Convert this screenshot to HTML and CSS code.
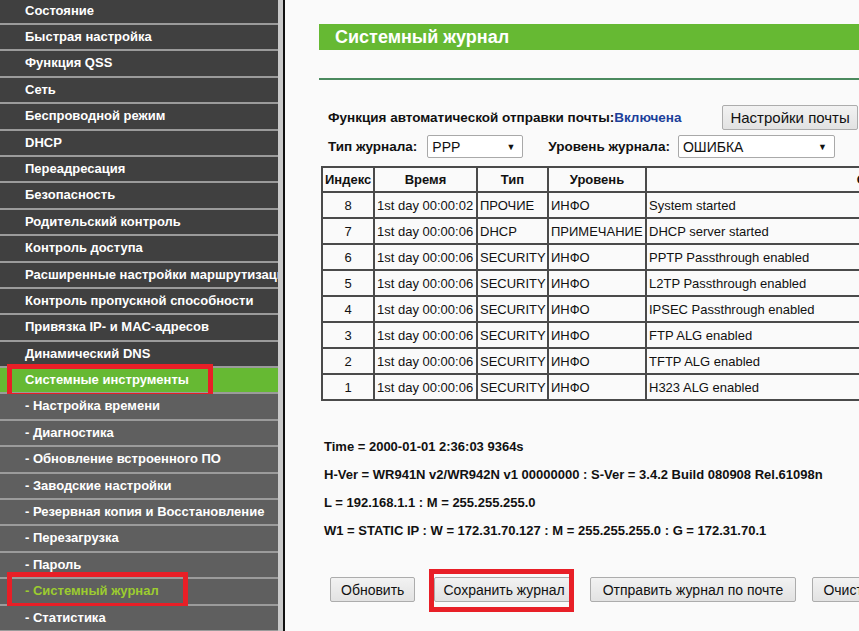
FILE: index.html
```html
<!DOCTYPE html>
<html lang="ru">
<head>
    <meta charset="UTF-8">
    <title>Системный журнал</title>
    <link rel="stylesheet" href="styles.css">
</head>
<body>

<div class="page">
    <nav class="menu">
        <a class="item">Состояние</a>
        <a class="item">Быстрая настройка</a>
        <a class="item">Функция QSS</a>
        <a class="item">Сеть</a>
        <a class="item">Беспроводной режим</a>
        <a class="item">DHCP</a>
        <a class="item">Переадресация</a>
        <a class="item">Безопасность</a>
        <a class="item">Родительский контроль</a>
        <a class="item">Контроль доступа</a>
        <a class="item">Расширенные настройки маршрутизации</a>
        <a class="item">Контроль пропускной способности</a>
        <a class="item">Привязка IP- и MAC-адресов</a>
        <a class="item">Динамический DNS</a>
        <a class="item open mark-tools">Системные инструменты</a>
        <a class="item sub">- Настройка времени</a>
        <a class="item sub">- Диагностика</a>
        <a class="item sub">- Обновление встроенного ПО</a>
        <a class="item sub">- Заводские настройки</a>
        <a class="item sub">- Резервная копия и Восстановление</a>
        <a class="item sub">- Перезагрузка</a>
        <a class="item sub">- Пароль</a>
        <a class="item sub current mark-log">- Системный журнал</a>
        <a class="item sub">- Статистика</a>
    </nav>
    <div class="divider"></div>

    <main class="content">
        <div class="title">Системный журнал</div>
        <div class="rule"></div>

        <div class="form-row mail-row">
            <span class="label">Функция автоматической отправки почты:<span class="on">Включена</span></span>
            <button class="btn mail-btn">Настройки почты</button>
        </div>

        <div class="form-row type-row">
            <span class="label">Тип журнала:</span>
            <div class="select type-select"><span>PPP</span><span class="arrow">▼</span></div>
            <span class="label level-label">Уровень журнала:</span>
            <div class="select level-select"><span>ОШИБКА</span><span class="arrow">▼</span></div>
        </div>

        <table class="log">
            <tr>
                <th class="c-idx">Индекс</th>
                <th class="c-time">Время</th>
                <th class="c-type">Тип</th>
                <th class="c-level">Уровень</th>
                <th class="c-msg">Сообщение</th>
            </tr>
            <tr><td class="num">8</td><td>1st day 00:00:02</td><td>ПРОЧИЕ</td><td>ИНФО</td><td>System started</td></tr>
            <tr><td class="num">7</td><td>1st day 00:00:06</td><td>DHCP</td><td>ПРИМЕЧАНИЕ</td><td>DHCP server started</td></tr>
            <tr><td class="num">6</td><td>1st day 00:00:06</td><td>SECURITY</td><td>ИНФО</td><td>PPTP Passthrough enabled</td></tr>
            <tr><td class="num">5</td><td>1st day 00:00:06</td><td>SECURITY</td><td>ИНФО</td><td>L2TP Passthrough enabled</td></tr>
            <tr><td class="num">4</td><td>1st day 00:00:06</td><td>SECURITY</td><td>ИНФО</td><td>IPSEC Passthrough enabled</td></tr>
            <tr><td class="num">3</td><td>1st day 00:00:06</td><td>SECURITY</td><td>ИНФО</td><td>FTP ALG enabled</td></tr>
            <tr><td class="num">2</td><td>1st day 00:00:06</td><td>SECURITY</td><td>ИНФО</td><td>TFTP ALG enabled</td></tr>
            <tr><td class="num">1</td><td>1st day 00:00:06</td><td>SECURITY</td><td>ИНФО</td><td>H323 ALG enabled</td></tr>
        </table>

        <div class="info">
            <p>Time = 2000-01-01 2:36:03 9364s</p>
            <p>H-Ver = WR941N v2/WR942N v1 00000000 : S-Ver = 3.4.2 Build 080908 Rel.61098n</p>
            <p>L = 192.168.1.1 : M = 255.255.255.0</p>
            <p>W1 = STATIC IP : W = 172.31.70.127 : M = 255.255.255.0 : G = 172.31.70.1</p>
        </div>

        <div class="actions">
            <button class="btn refresh">Обновить</button>
            <button class="btn save mark-save">Сохранить журнал</button>
            <button class="btn send">Отправить журнал по почте</button>
            <button class="btn">Очистить журнал</button>
        </div>
    </main>
</div>

</body>
</html>
```

FILE: styles.css
```css
body {
    margin: 0;
    height: 631px;
    overflow: hidden;
    font-family: "Liberation Sans", Arial, sans-serif;
    background: #fafafa;
}

.page {
    display: flex;
    height: 631px;
}

/* left menu */
.menu {
    width: 278px;
    flex-shrink: 0;
    background: #5f5f5f;
    margin-top: -1.4px;
    overflow: hidden;
}

.item {
    display: block;
    position: relative;
    height: 24.4px;
    line-height: 24px;
    padding-left: 25px;
    border-bottom: 2px solid #9b9b9b;
    background: #404040;
    color: #fff;
    font-size: 13px;
    font-weight: bold;
    white-space: nowrap;
}

.item.open {
    background: #66b933;
}

.item.sub {
    background: #5f5f5f;
}

.item.current {
    color: #9ccc2f;
}

/* red marks drawn over the screenshot */
.mark-tools::after,
.mark-log::after,
.mark-save::after {
    content: "";
    position: absolute;
    border: 5px solid #e81f27;
    pointer-events: none;
}

.mark-tools::after {
    left: 7px;
    top: -4px;
    width: 196px;
    height: 24px;
}

.mark-log::after {
    left: 7px;
    top: -7px;
    width: 171px;
    height: 26px;
}

.divider {
    width: 5px;
    flex-shrink: 0;
    background: #c9c9c9;
    border-right: 2px solid #111;
}

/* right side */
.content {
    flex: 1;
    min-width: 0;
    padding: 24px 0 0 34px;
    white-space: nowrap;
}

.title {
    height: 26px;
    line-height: 26px;
    background: #66b933;
    color: #fff;
    font-size: 18px;
    font-weight: bold;
    padding-left: 16px;
}

.rule {
    height: 2px;
    margin-top: 28px;
    background: #4b8a5e;
}

.btn {
    position: relative;
    height: 25px;
    padding: 0 10px;
    font-family: "Liberation Sans", Arial, sans-serif;
    font-size: 14px;
    color: #111;
    background: linear-gradient(#f2f2f2, #e2e2e2);
    border: 1px solid #acacac;
    border-radius: 2px;
}

.form-row {
    display: flex;
    align-items: center;
    padding-left: 9px;
    font-size: 13.5px;
}

.label {
    font-weight: bold;
    color: #111;
}

.on {
    color: #1c3f9a;
}

.mail-row {
    margin-top: 25px;
    height: 24px;
}

.mail-row .mail-btn {
    margin-left: 41px;
    padding: 0 7px;
    font-size: 15px;
}

.type-row {
    margin-top: 6px;
    height: 23px;
}

.select {
    display: flex;
    justify-content: space-between;
    align-items: center;
    box-sizing: border-box;
    height: 23px;
    padding: 0 7px 0 4px;
    background: #fff;
    border: 1px solid #a9a9a9;
    border-radius: 2px;
    font-size: 14px;
    color: #111;
}

.select .arrow {
    font-size: 9px;
}

.type-select {
    width: 96px;
    margin-left: 10px;
}

.level-label {
    margin-left: 25px;
}

.level-select {
    width: 157px;
    margin-left: 8px;
}

/* log table */
.log {
    margin: 8px 0 0 2px;
    width: 820px;
    table-layout: fixed;
    border-collapse: collapse;
    border: 2px solid #3a3a3a;
    font-size: 13px;
    color: #111;
}

.log th,
.log td {
    box-sizing: border-box;
    height: 26px;
    padding: 0 2px;
    border: 2px solid #4a4a4a;
    text-align: left;
    overflow: hidden;
}

.log th {
    height: 25px;
    text-align: center;
}

.log td.num {
    text-align: center;
}

.c-idx { width: 52px; }
.c-time { width: 103px; }
.c-type { width: 71px; }
.c-level { width: 98px; }
.c-msg { width: 496px; }

.info {
    margin-top: 32px;
    padding-left: 5px;
    font-size: 13px;
    font-weight: bold;
    color: #111;
}

.info p {
    margin: 0;
    height: 28px;
    line-height: 28px;
}

.actions {
    display: flex;
    gap: 16px;
    margin-top: 32px;
    padding-left: 11px;
}

.actions .save {
    margin-left: 3px;
    padding: 0 8px;
}

.actions .send {
    padding: 0 12px;
}

.mark-save::after {
    left: -6px;
    top: -9px;
    width: 135px;
    height: 33px;
}
```
